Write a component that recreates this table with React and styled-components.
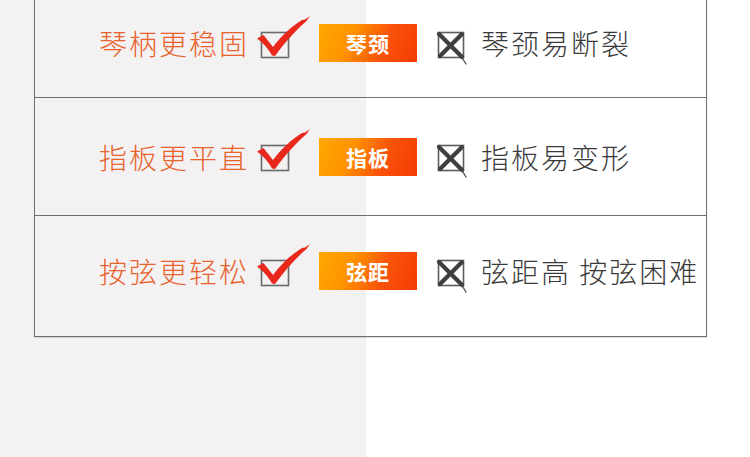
import React from 'react';
import styled, { createGlobalStyle } from 'styled-components';

const GlobalStyle = createGlobalStyle`
  html, body {
    margin: 0;
    padding: 0;
  }
  body {
    font-family: "Noto Sans CJK SC", "Noto Sans", sans-serif;
  }
`;

const Page = styled.div`
  width: 750px;
  height: 457px;
  overflow: hidden;
  background: linear-gradient(90deg, #f3f1f2 0, #f3f1f2 366px, #ffffff 366px);
`;

const Table = styled.div`
  margin: -21px 0 0 34px;
  width: 673px;
  box-sizing: border-box;
  border-left: 1px solid #6f6f6f;
  border-right: 1px solid #6f6f6f;
  display: flex;
  flex-direction: column;
  box-shadow: 0 1px 1px rgba(0, 0, 0, 0.12);
`;

const Row = styled.div`
  box-sizing: border-box;
  height: ${props => props.$height}px;
  border-bottom: 1px solid #6f6f6f;
  display: flex;
  align-items: center;
  padding: ${props => (props.$nudge > 0 ? `${props.$nudge * 2}px 0 0` : `0 0 ${-props.$nudge * 2}px`)};
`;

const Good = styled.span`
  width: 157px;
  margin-left: 64px;
  font-size: 28px;
  font-weight: 300;
  line-height: 1;
  letter-spacing: 2px;
  color: #e8622c;
  white-space: nowrap;
`;

const Bad = styled.span`
  margin-left: 11px;
  font-size: 28px;
  font-weight: 300;
  line-height: 1;
  letter-spacing: 2px;
  color: #3a3a3a;
  white-space: nowrap;
`;

const Badge = styled.div`
  margin-left: 7px;
  width: 98px;
  height: 38px;
  display: flex;
  align-items: center;
  justify-content: center;
  background: linear-gradient(112deg, #ffa800 0%, #ff9400 32%, #f9520a 66%, #f43c04 100%);
  color: #ffffff;
  font-size: 21px;
  font-weight: 700;
  letter-spacing: 1px;
`;

const XWrap = styled.div`
  margin-left: 17px;
  width: 36px;
  height: 57px;
  display: flex;
`;

const CheckMark = () => (
  <svg width="56" height="57" viewBox="0 0 56 57">
    <rect x="5.5" y="17.5" width="27" height="25" fill="none" stroke="#6a6a6a" strokeWidth="1.6" />
    <path
      d="M1 23.5 L7.5 20 L17 32 C25 21 36 11 46 5 L49 4.5 L54 1 L50.5 6 C41 14 30 26 19 41 L16 40.5 C12 33 6 27 1 23.5 Z"
      fill="#e8281a"
    />
  </svg>
);

const XMark = () => (
  <XWrap>
    <svg width="36" height="57" viewBox="0 0 36 57">
      <rect x="4.5" y="17.5" width="25" height="25" fill="none" stroke="#5c5c5c" strokeWidth="1.6" />
      <path d="M5 19 L28 42" stroke="#3f3f3f" strokeWidth="4.2" strokeLinecap="round" />
      <path d="M27.5 19.5 L6 41" stroke="#3f3f3f" strokeWidth="4.2" strokeLinecap="round" />
      <path d="M27 41 L32 49" stroke="#4a4a4a" strokeWidth="1.3" strokeLinecap="round" />
    </svg>
  </XWrap>
);

const rows = [
  { good: '琴柄更稳固', tag: '琴颈', bad: '琴颈易断裂', height: 119, nudge: 5 },
  { good: '指板更平直', tag: '指板', bad: '指板易变形', height: 118, nudge: 0 },
  { good: '按弦更轻松', tag: '弦距', bad: '弦距高 按弦困难', height: 121, nudge: -5 },
];

const App = () => {
  return (
    <Page>
      <GlobalStyle />
      <Table>
        {rows.map(r => (
          <Row key={r.tag} $height={r.height} $nudge={r.nudge}>
            <Good>{r.good}</Good>
            <CheckMark />
            <Badge>{r.tag}</Badge>
            <XMark />
            <Bad>{r.bad}</Bad>
          </Row>
        ))}
      </Table>
    </Page>
  );
};

export default App;
